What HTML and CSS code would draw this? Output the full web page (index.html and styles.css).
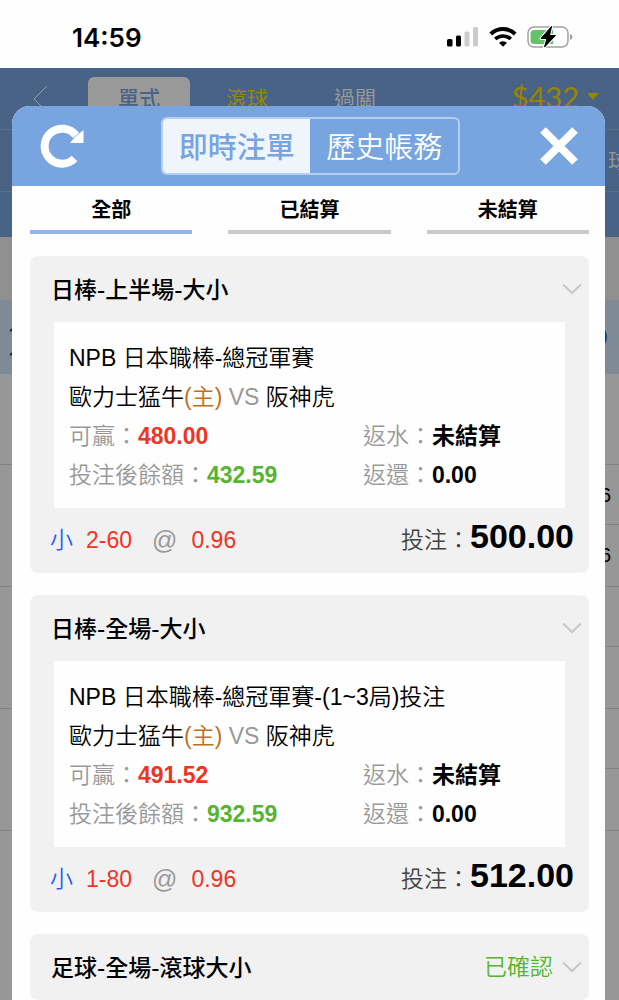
FILE: index.html
```html
<!DOCTYPE html>
<html lang="zh-Hant">
  <head>
    <meta charset="UTF-8" />
    <meta name="viewport" content="width=device-width, initial-scale=1.0" />
    <title>即時注單</title>
    <link rel="stylesheet" href="styles.css">
  </head>
  <body>
    <div class="status">
      <span class="time">14:59</span>
      <div class="status-icons">
        <svg width="32" height="22" viewBox="0 0 32 22">
          <rect x="0" y="13" width="5.500" height="7.500" rx="1.500" fill="#000"/>
          <rect x="9" y="9.500" width="5" height="11" rx="1.500" fill="#000"/>
          <rect x="17.500" y="5.500" width="5" height="15" rx="1.500" fill="#ccc"/>
          <rect x="26" y="1" width="5" height="19.500" rx="1.500" fill="#ccc"/>
        </svg>
        <svg width="28" height="22" viewBox="0 0 28 22">
          <path d="M1.800 8A17.500 17.500 0 0 1 26.200 8" fill="none" stroke="#000" stroke-width="4"/>
          <path d="M6.200 13A11.500 11.500 0 0 1 21.800 13" fill="none" stroke="#000" stroke-width="3.600"/>
          <path d="M10 16.700A6 6 0 0 1 18 16.700L14 20.700Z" fill="#000"/>
        </svg>
        <svg width="46" height="24" viewBox="0 0 46 24">
          <rect x="1" y="2" width="40" height="20" rx="6" fill="#fff" stroke="#a0a0a0" stroke-width="1.500"/>
          <path d="M7 5H26V19H7Q3.500 19 3.500 15.500V8.500Q3.500 5 7 5Z" fill="#62c466"/>
          <path d="M43 9Q45.500 10 45.500 12T43 15Z" fill="#a0a0a0"/>
          <path d="M24.500 1.500L14 13.500H20L17.500 22L28.500 10.500H22.500Z" fill="#000" stroke="#fff" stroke-width="3" paint-order="stroke" stroke-linejoin="round"/>
          <path d="M24.500 1.500L14 13.500H20L17.500 22L28.500 10.500H22.500Z" fill="#000" stroke="#000" stroke-width="1" stroke-linejoin="round"/>
        </svg>
      </div>
    </div>
    <div class="app">
      <div class="page">
        <div class="nav">
          <a class="back" href="#" aria-label="返回">
            <svg width="16" height="28" viewBox="0 0 16 28"><path d="M15 1L2 14L15 27" fill="none" stroke="#fff"/></svg>
          </a>
          <a class="mode active" href="#">單式</a>
          <a class="mode live" href="#">滾球</a>
          <a class="mode" href="#">過關</a>
          <a class="money" href="#">$432</a>
        </div>
        <div class="sports"><a href="#">球</a></div>
        <div class="leagues"></div>
        <div class="strip"></div>
        <div class="match">
          <svg width="10" height="40" viewBox="0 0 10 40"><path d="M2 7L6 4M2 31L6 28" fill="none" stroke="#333" stroke-width="2"/></svg>
          <span class="count">1</span>
        </div>
        <div class="odds first"></div>
        <div class="odds"><div class="cell">6</div><div class="cell">6</div></div>
        <div class="odds"><div class="cell"></div><div class="cell"></div></div>
        <div class="odds"><div class="cell"></div><div class="cell"></div></div>
      </div>
      <div class="overlay">
        <div class="modal">
          <div class="modal-head">
            <button class="icon-btn" type="button" aria-label="重新整理">
              <svg width="46" height="46" viewBox="0 0 46 46">
                <path d="M35.500 35.500A17.500 17.500 0 1 1 37 12.500" fill="none" stroke="#fff" stroke-width="8"/>
                <path d="M44.500 7V20H31L36 14Z" fill="#fff"/>
              </svg>
            </button>
            <div class="switch">
              <button class="on" type="button">即時注單</button>
              <button type="button">歷史帳務</button>
            </div>
            <button class="icon-btn" type="button" aria-label="關閉">
              <svg width="46" height="46" viewBox="0 0 46 46"><path d="M7 7L39 39M39 7L7 39" stroke="#fff" stroke-width="8"/></svg>
            </button>
          </div>
          <div class="tabs">
            <button class="tab on" type="button">全部</button>
            <button class="tab" type="button">已結算</button>
            <button class="tab" type="button">未結算</button>
          </div>
          <div class="list">
            <div class="card">
              <div class="card-head">
                <h2>日棒-上半場-大小</h2>
                <svg class="arrow" width="20" height="12" viewBox="0 0 20 12"><path d="M1 1.500L10 10L19 1.500"/></svg>
              </div>
              <div class="detail">
                <p>NPB 日本職棒-總冠軍賽</p>
                <p>歐力士猛牛<span class="home">(主)</span> <span class="gray">VS</span> 阪神虎</p>
                <div class="pair">
                  <p><span class="gray">可贏：</span><b class="red">480.00</b></p>
                  <p><span class="gray">返水：</span><b>未結算</b></p>
                </div>
                <div class="pair">
                  <p><span class="gray">投注後餘額：</span><b class="green">432.59</b></p>
                  <p><span class="gray">返還：</span><b>0.00</b></p>
                </div>
              </div>
              <div class="card-foot">
                <span class="side">小</span>
                <span class="red line">2-60</span>
                <span class="at">@</span>
                <span class="red">0.96</span>
                <span class="stake">投注：<b>500.00</b></span>
              </div>
            </div>
            <div class="card">
              <div class="card-head">
                <h2>日棒-全場-大小</h2>
                <svg class="arrow" width="20" height="12" viewBox="0 0 20 12"><path d="M1 1.500L10 10L19 1.500"/></svg>
              </div>
              <div class="detail">
                <p>NPB 日本職棒-總冠軍賽-(1~3局)投注</p>
                <p>歐力士猛牛<span class="home">(主)</span> <span class="gray">VS</span> 阪神虎</p>
                <div class="pair">
                  <p><span class="gray">可贏：</span><b class="red">491.52</b></p>
                  <p><span class="gray">返水：</span><b>未結算</b></p>
                </div>
                <div class="pair">
                  <p><span class="gray">投注後餘額：</span><b class="green">932.59</b></p>
                  <p><span class="gray">返還：</span><b>0.00</b></p>
                </div>
              </div>
              <div class="card-foot">
                <span class="side">小</span>
                <span class="red line">1-80</span>
                <span class="at">@</span>
                <span class="red">0.96</span>
                <span class="stake">投注：<b>512.00</b></span>
              </div>
            </div>
            <div class="card">
              <div class="card-head">
                <h2>足球-全場-滾球大小</h2>
                <span class="state">已確認</span>
                <svg class="arrow" width="20" height="12" viewBox="0 0 20 12"><path d="M1 1.500L10 10L19 1.500"/></svg>
              </div>
            </div>
          </div>
        </div>
      </div>
    </div>
  </body>
</html>
```

FILE: styles.css
```css
*{
    padding: 0;
    margin: 0;
    box-sizing: border-box;
}
body{
    height: 100vh;
    display: flex;
    flex-direction: column;
    overflow: hidden;
    background-color: #fefefe;
    color: #000;
    font-family: "Liberation Sans", "Noto Sans CJK TC", sans-serif;
    font-size: 23px;
    font-weight: 350;
}
button{
    font-family: inherit;
    font-weight: inherit;
    background: none;
    border: none;
    cursor: pointer;
}
a{
    color: inherit;
    text-decoration: none;
}
svg{
    display: block;
}

/* phone status bar */
.status{
    flex: none;
    height: 68px;
    padding: 6px 46px 0 72px;
    display: flex;
    align-items: center;
    justify-content: space-between;
}
.time{
    font-family: Inter, sans-serif;
    font-size: 26px;
    font-weight: 600;
}
.status-icons{
    display: flex;
    align-items: center;
    gap: 10px;
}

/* betting page under the modal */
.app{
    flex: 1;
    min-height: 0;
    position: relative;
}
.page{
    height: 100%;
    overflow: hidden;
    background-color: #fcfcfc;
}
.nav{
    height: 62px;
    padding: 0 20px 0 32px;
    display: flex;
    align-items: center;
    background-color: #78a5df;
    border-bottom: 1px solid #95b9e6;
    color: #fff;
}
.mode{
    width: 102px;
    padding: 4px 0;
    margin-right: 6px;
    border-radius: 6px;
    font-size: 21px;
    line-height: 36px;
    text-align: center;
}
.back{
    margin-right: 40px;
}
.active{
    background-color: #fff;
    color: #78a5df;
    font-weight: 500;
}
.live{
    color: #ffe500;
}
.money{
    margin-left: auto;
    padding-bottom: 4px;
    display: flex;
    align-items: center;
    gap: 8px;
    color: #ffdc00;
    font-family: Lato, sans-serif;
    font-size: 29px;
    font-weight: 400;
}
.money::after{
    content: "";
    border: 6px solid transparent;
    border-top: 7px solid #ffdc00;
    border-bottom: 0;
}
.sports{
    height: 62px;
    padding-bottom: 4px;
    display: flex;
    align-items: center;
    justify-content: flex-end;
    background-color: #78a5df;
    border-bottom: 1px solid #95b9e6;
    color: #fff;
    font-size: 21px;
}
.sports a{
    margin-right: -10px;
}
.leagues{
    height: 45px;
    background-color: #78a5df;
}
.strip{
    height: 63px;
    background-color: #f1f1f1;
}
.match{
    height: 74px;
    padding: 0 12px 10px 8px;
    display: flex;
    align-items: flex-end;
    justify-content: space-between;
    background-color: #d2e6fa;
}
.count{
    width: 24px;
    margin-bottom: 15px;
    border-radius: 12px;
    background-color: #0a6cff;
    color: #fff;
    font-size: 16px;
    line-height: 24px;
    text-align: center;
}
.odds{
    border-bottom: 1px solid #d8d8d8;
}
.first{
    height: 91px;
}
.cell{
    height: 61px;
    margin-left: 50%;
    padding-right: 8px;
    font-size: 20px;
    line-height: 60px;
    text-align: right;
}
.cell:first-child{
    height: 60px;
    border-bottom: 1px solid #d8d8d8;
}
.overlay{
    position: absolute;
    inset: 0;
    padding: 38px 14px 0 12px;
    background-color: rgba(0, 0, 0, 0.4);
}

/* modal */
.modal{
    height: 100%;
    overflow: hidden;
    border-radius: 18px 18px 0 0;
    background-color: #fefefe;
}
.modal-head{
    height: 80px;
    padding: 0 23px 0 27px;
    display: flex;
    align-items: center;
    justify-content: space-between;
    background-color: #78a5df;
}
.switch{
    width: 55%;
    display: grid;
    grid-template-columns: 1fr 1fr;
    border: 2px solid #b4cff0;
    border-radius: 6px;
    overflow: hidden;
}
.switch button{
    padding-top: 4px;
    color: #fff;
    font-size: 29px;
    line-height: 50px;
    white-space: nowrap;
}
.switch .on{
    background-color: #eff5fa;
    color: #78a5df;
    font-weight: 500;
}
.tabs{
    padding: 0 16px 0 18px;
    display: grid;
    grid-template-columns: repeat(3, 1fr);
    gap: 36px;
}
.tab{
    padding-top: 4px;
    border-bottom: 4px solid #cacaca;
    font-size: 20px;
    font-weight: bold;
    line-height: 40px;
}
.tabs .on{
    border-color: #92b6e9;
}
.list{
    padding: 22px 16px 0 18px;
    display: flex;
    flex-direction: column;
    gap: 22px;
}
.card{
    border-radius: 8px;
    background-color: #f1f1f1;
}
.card-head{
    height: 66px;
    padding: 0 7px 0 21px;
    display: flex;
    align-items: center;
    gap: 9px;
}
h2{
    flex: 1;
    padding-bottom: 2px;
    font-family: "Noto Sans CJK TC", sans-serif;
    font-size: 23px;
    font-weight: 500;
    line-height: 34px;
}
.arrow{
    fill: none;
    stroke: #c8c8c8;
    stroke-width: 2;
}
.state{
    padding-bottom: 4px;
    color: #55b531;
}
.detail{
    margin: 0 24px;
    padding: 17px 15px 13px;
    background-color: #fefefe;
    line-height: 39px;
}
.pair{
    display: grid;
    grid-template-columns: 11fr 7fr;
}
.gray{
    color: #999;
}
.home{
    color: #c0701c;
}
.red{
    color: #ee3524;
}
.green{
    color: #55b531;
}
.card-foot{
    height: 65px;
    padding: 0 15px 0 20px;
    display: flex;
    align-items: center;
    line-height: 39px;
}
.side{
    margin-right: 13px;
    color: #2460f5;
}
.line{
    margin-right: 20px;
}
.at{
    margin-right: 14px;
    color: #999;
    font-size: 25px;
}
.stake{
    margin-left: auto;
    padding-bottom: 4px;
    color: #444;
}
.stake b{
    color: #000;
    font-size: 34px;
}
```
